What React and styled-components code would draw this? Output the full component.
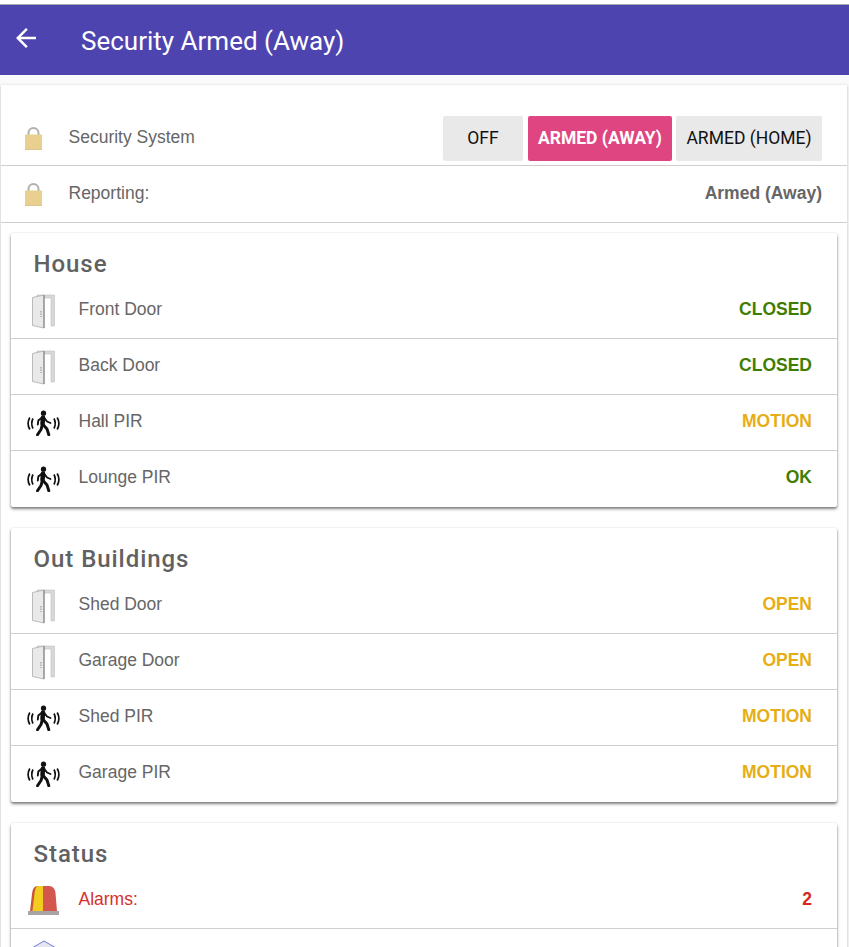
import styled, { createGlobalStyle } from "styled-components";

const GlobalStyle = createGlobalStyle`
html, body {
  margin: 0;
  padding: 0;
  height: 947px;
  overflow: hidden;
  background: #fafafa;
}
`;

const Page = styled.div`
  width: 849px;
  height: 947px;
  overflow: hidden;
  font-family: Roboto, "Liberation Sans", sans-serif;
  color: #616161;
  padding-top: 5px;
  box-sizing: border-box;
  background: linear-gradient(#fff 0 4px, #a9a9b0 4px 5px, #fafafa 5px);
`;

const Header = styled.header`
  height: 70px;
  background: #4e44b0;
  display: flex;
  align-items: center;
  padding-left: 11px;
  color: #fff;
`;

const BackIcon = styled.svg`
  width: 30px;
  height: 30px;
  margin-top: -5px;
  flex: none;
`;

const Title = styled.h1`
  margin: 1px 0 0 40px;
  font-size: 26px;
  font-weight: 400;
`;

const Outer = styled.main`
  margin: 10px 2px 0 1px;
  background: #fff;
  box-shadow: 0 1px 3px rgba(0, 0, 0, 0.25);
  padding-bottom: 10px;
`;

const TopRow = styled.div`
  height: ${(p) => p.$height}px;
  box-sizing: border-box;
  padding: ${(p) => p.$top}px 25px ${(p) => p.$bottom}px 21px;
  display: flex;
  align-items: center;
  border-bottom: 1px solid #cfcfcf;
`;

const LockIcon = styled.svg`
  width: 22px;
  height: 26px;
  flex: none;
  margin-top: 4px;
`;

const TopLabel = styled.span`
  margin-left: 24.500px;
  font: 400 17.500px "Liberation Sans", sans-serif;
  color: #666;
  flex: 1;
`;

const ButtonGroup = styled.div`
  display: flex;
  gap: 4px;
  margin-top: 3px;
`;

const ModeButton = styled.button`
  height: 45px;
  width: ${(p) => p.$width}px;
  margin-left: ${(p) => p.$gap || 0}px;
  padding: 0 0 2px;
  border: 0;
  border-radius: 2px;
  background: ${(p) => (p.$active ? "#df4580" : "#e9e9e9")};
  color: ${(p) => (p.$active ? "#fff" : "#111")};
  font: ${(p) => (p.$active ? 700 : 400)} 17.500px Roboto, sans-serif;
`;

const ReportValue = styled.span`
  font: 700 17.500px "Liberation Sans", sans-serif;
  color: #666;
`;

const Card = styled.section`
  margin: 10px 10px 21px 10px;
  background: #fff;
  box-shadow: 0 2px 3px rgba(0, 0, 0, 0.5), 0 0 2px rgba(0, 0, 0, 0.12);
  border-radius: 2px;
`;

const CardTitle = styled.h2`
  margin: 0;
  height: 50px;
  padding: 15px 0 0 22.500px;
  box-sizing: border-box;
  font-size: 24px;
  font-weight: 500;
  letter-spacing: 0.950px;
  line-height: 32px;
  color: #616161;
`;

const Row = styled.div`
  height: 56px;
  box-sizing: border-box;
  display: flex;
  align-items: center;
  padding: 0 25px ${(p) => (p.$last ? "1px" : "0")} 16px;
  border-bottom: ${(p) => (p.$last ? "0" : "1px solid #cfcfcf")};
`;

const IconSlot = styled.div`
  width: 34px;
  height: 40px;
  flex: none;
  display: flex;
  align-items: center;
  justify-content: center;
`;

const RowLabel = styled.span`
  margin: 0 0 2px 17.500px;
  flex: 1;
  font: 400 17.500px "Liberation Sans", sans-serif;
  color: ${(p) => (p.$alarm ? "#d6302a" : "#666")};
`;

const RowValue = styled.span`
  margin-bottom: 2px;
  font: 700 17.500px "Liberation Sans", sans-serif;
  color: ${(p) => p.$color};
`;

function Lock() {
  return (
    <LockIcon viewBox="0 0 22 26">
      <path d="M6.500 9V7a5 5 0 0 1 10 0v2" fill="none" stroke="#b0b0b0" strokeWidth="2" />
      <rect x="3" y="8.500" width="17" height="15" fill="#e9cf90" />
      <rect x="3" y="23" width="17" height="0.800" fill="#d6ba7c" />
    </LockIcon>
  );
}

function Door() {
  return (
    <svg width="26" height="36" viewBox="0 0 26 36">
      <path d="M6 2h17.500v31H20V5H6z" fill="#d8d8d8" stroke="#c0c0c0" strokeWidth="0.600" />
      <path d="M1.500 4.500L13 2v33L1.500 32.500z" fill="#e9e9e9" stroke="#b4b4b4" strokeWidth="0.900" />
      <path d="M13 2v33" stroke="#7f7f7f" strokeWidth="1.100" />
      <path d="M10 18v6" stroke="#8a8a8a" strokeWidth="1" strokeDasharray="1.500 1" />
    </svg>
  );
}

function Pir() {
  return (
    <svg width="34" height="26" viewBox="0 0 34 26">
      <circle cx="16.500" cy="3.200" r="2.600" fill="#111" />
      <g fill="none" stroke="#111" strokeLinejoin="round" strokeLinecap="round">
        <path d="M16 7.500L15.500 14" strokeWidth="4.500" />
        <path d="M15 7.500L11.300 10.500L10.800 14.500" strokeWidth="1.900" />
        <path d="M17 7.500L20 11.500L23.500 13" strokeWidth="1.900" />
        <path d="M15.500 14.500L14 19.500L10.500 24.800" strokeWidth="2.900" />
        <path d="M16 14.500L20 19L21.800 24.800" strokeWidth="2.900" />
      </g>
      <g fill="none" stroke="#111" strokeWidth="1.700">
        <path d="M6 8.500c-1.500 3-1.500 7 0 10" />
        <path d="M2.800 7.500c-2 3.500-2 8.500 0 12" />
        <path d="M27 8.500c1.500 3 1.500 7 0 10" />
        <path d="M30.200 7.500c2 3.500 2 8.500 0 12" />
      </g>
    </svg>
  );
}

function Siren() {
  return (
    <svg width="34" height="32" viewBox="0 0 34 32">
      <path d="M16 1h6c4 0 6 3 6.500 7l1.500 18H16z" fill="#d4574e" />
      <path d="M16 1h-6C8 2 7.500 5 7 9L5 26h11z" fill="#f2cd1f" />
      <path d="M11 1C7 1 5.500 4 5 9L3 26h2.500L7.500 9C8 5 8.500 2 11 1z" fill="#c9573a" />
      <rect x="1" y="26" width="31" height="4" fill="#a8a4a4" />
    </svg>
  );
}

function Hex() {
  return (
    <svg width="26" height="34" viewBox="0 0 26 34">
      <path d="M13 1L25 8v18l-12 7-12-7V8z" fill="#e6e6f0" stroke="#6f78d6" strokeWidth="1" />
    </svg>
  );
}

const GREEN = "#3f7d00";
const AMBER = "#e6ae14";

const sections = [
  {
    title: "House",
    rows: [
      { icon: "door", label: "Front Door", value: "CLOSED", color: GREEN },
      { icon: "door", label: "Back Door", value: "CLOSED", color: GREEN },
      { icon: "pir", label: "Hall PIR", value: "MOTION", color: AMBER },
      { icon: "pir", label: "Lounge PIR", value: "OK", color: GREEN },
    ],
  },
  {
    title: "Out Buildings",
    rows: [
      { icon: "door", label: "Shed Door", value: "OPEN", color: AMBER },
      { icon: "door", label: "Garage Door", value: "OPEN", color: AMBER },
      { icon: "pir", label: "Shed PIR", value: "MOTION", color: AMBER },
      { icon: "pir", label: "Garage PIR", value: "MOTION", color: AMBER },
    ],
  },
];

export default function App() {
  return (
    <Page>
      <GlobalStyle />
      <Header>
        <BackIcon viewBox="0 0 24 24">
          <path d="M20 11H7.800l5.600-5.600L12 4l-8 8 8 8 1.400-1.400L7.800 13H20z" fill="#fff" />
        </BackIcon>
        <Title>Security Armed (Away)</Title>
      </Header>
      <Outer>
        <TopRow $height={81} $top={24} $bottom={0}>
          <Lock />
          <TopLabel>Security System</TopLabel>
          <ButtonGroup>
            <ModeButton $width={80}>OFF</ModeButton>
            <ModeButton $width={144} $gap={1} $active>ARMED (AWAY)</ModeButton>
            <ModeButton $width={146}>ARMED (HOME)</ModeButton>
          </ButtonGroup>
        </TopRow>
        <TopRow $height={57} $top={0} $bottom={2}>
          <Lock />
          <TopLabel>Reporting:</TopLabel>
          <ReportValue>Armed (Away)</ReportValue>
        </TopRow>
        {sections.map((s) => (
          <Card key={s.title}>
            <CardTitle>{s.title}</CardTitle>
            {s.rows.map((r, i) => (
              <Row key={r.label} $last={i === s.rows.length - 1}>
                <IconSlot>{r.icon === "door" ? <Door /> : <Pir />}</IconSlot>
                <RowLabel>{r.label}</RowLabel>
                <RowValue $color={r.color}>{r.value}</RowValue>
              </Row>
            ))}
          </Card>
        ))}
        <Card>
          <CardTitle>Status</CardTitle>
          <Row>
            <IconSlot><Siren /></IconSlot>
            <RowLabel $alarm>Alarms:</RowLabel>
            <RowValue $color="#d9261c">2</RowValue>
          </Row>
          <Row $last>
            <IconSlot><Hex /></IconSlot>
          </Row>
        </Card>
      </Outer>
    </Page>
  );
}
